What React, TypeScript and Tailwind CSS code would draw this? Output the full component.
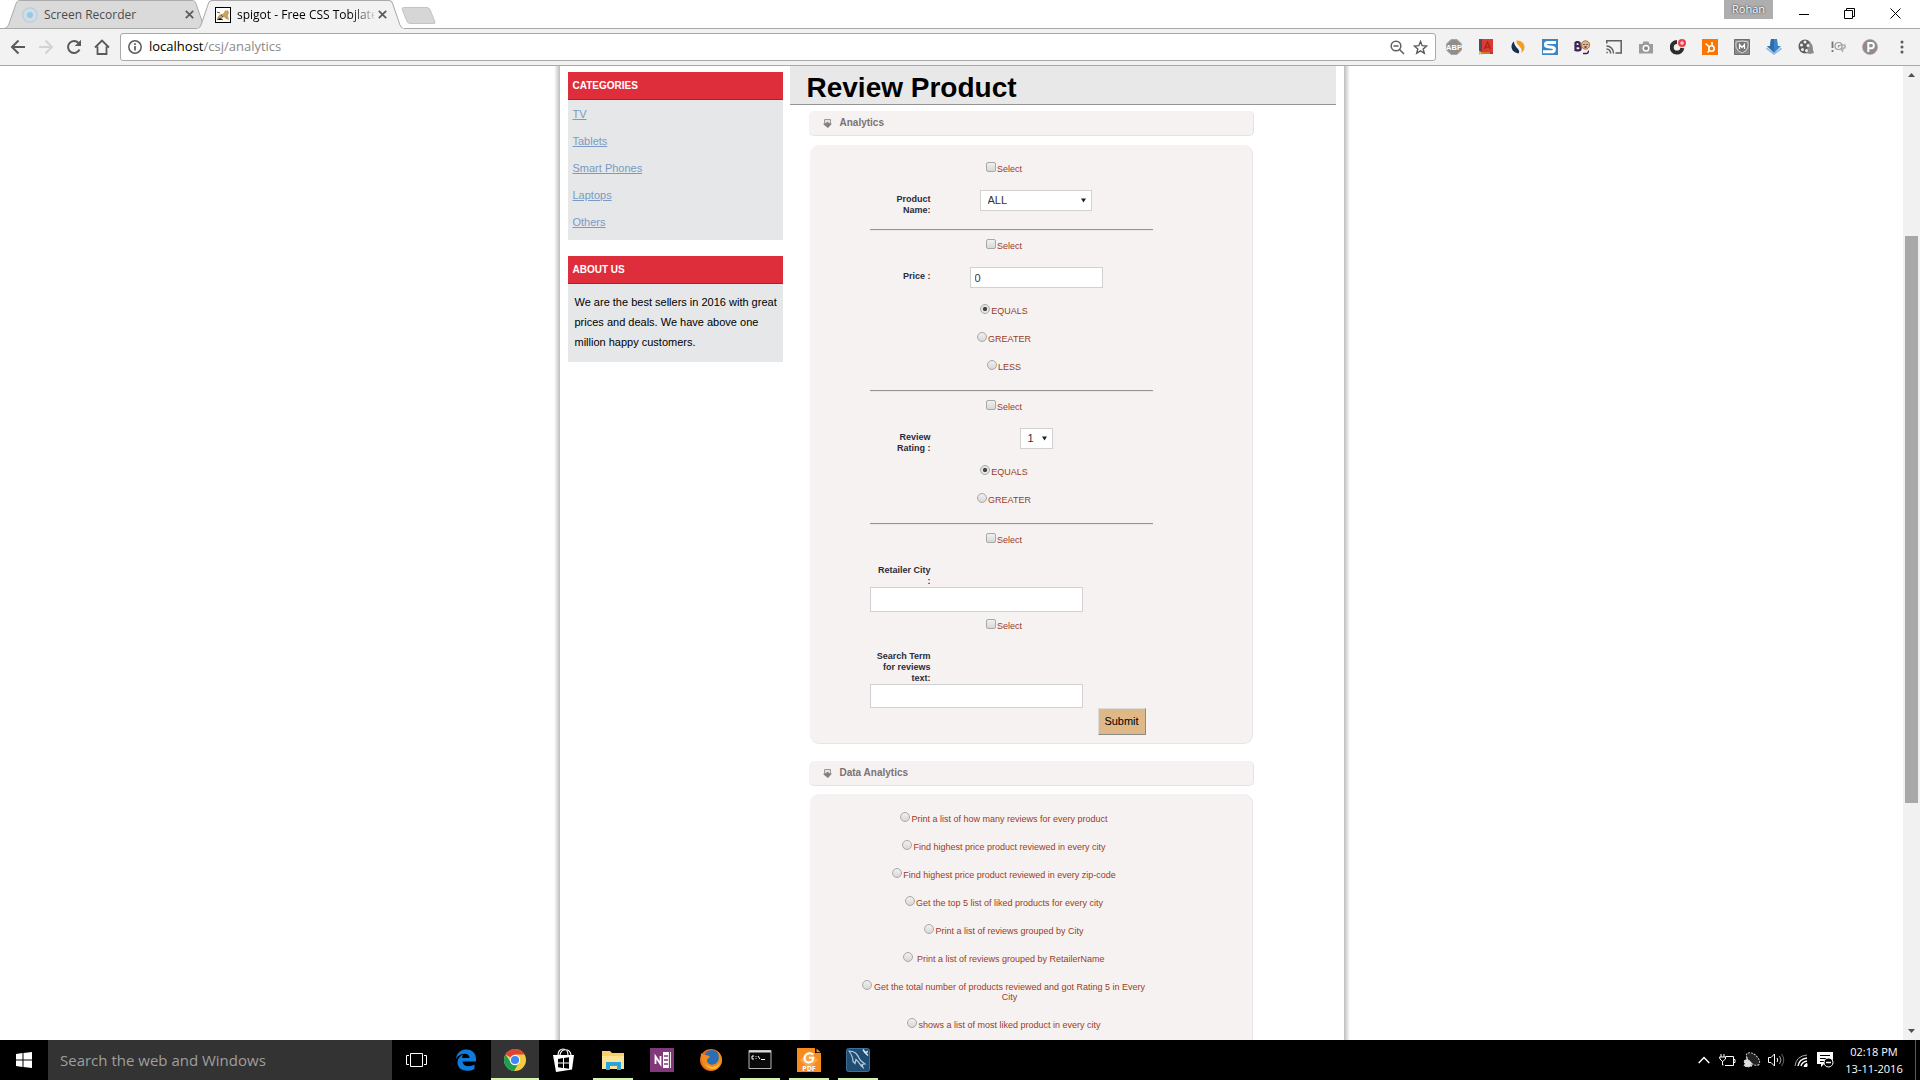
import type { ReactNode } from "react";

const ARIAL = "font-['Liberation_Sans',Arial,sans-serif]";

function TabShape({ active }: { active: boolean }) {
  return (
    <svg
      className="absolute inset-0 h-full w-full"
      viewBox="0 0 206 28"
      preserveAspectRatio="none"
      aria-hidden="true"
    >
      <path
        d="M0 28.5 C3 28 4 26 5 24 L12 4 C13 1 14 .5 16 .5 H190 C192 .5 193 1 194 4 L201 24 C202 26 203 28 206 28.5Z"
        fill={active ? "#f2f2f2" : "#dadada"}
        stroke="#a9a9a9"
      />
      {active && <path d="M1 28.5H205" stroke="#f2f2f2" strokeWidth="2" />}
    </svg>
  );
}

function CloseGlyph() {
  return (
    <svg width="9" height="9" viewBox="0 0 9 9" stroke="#5a5a5a" strokeWidth="1.7" aria-hidden="true">
      <path d="M.8 .8l7.4 7.4M8.2 .8L.8 8.2" />
    </svg>
  );
}

function TabStrip() {
  return (
    <div className="flex h-[29px] items-start justify-between border-b border-[#a9a9a9] bg-white">
      <div className="flex h-[29px] pl-1">
        <div className="relative flex h-7 w-[204px] items-center pl-[18px] pr-[14px]">
          <TabShape active={false} />
          <svg className="relative mt-px" width="16" height="16" viewBox="0 0 16 16" aria-hidden="true">
            <circle cx="8" cy="8" r="7.2" fill="none" stroke="#a5d4ee" strokeWidth="1.3" />
            <circle cx="8" cy="8" r="3" fill="#8fcaf0" />
          </svg>
          <span className="relative ml-1.5 flex-1 pt-0.5 text-[12px] text-[#4c4c4c]">Screen Recorder</span>
          <button type="button" aria-label="Close Screen Recorder" className="relative">
            <CloseGlyph />
          </button>
        </div>
        <div className="relative -ml-3 flex h-[29px] w-[209px] items-center pl-[19px] pr-[18px]">
          <TabShape active />
          <svg className="relative" width="16" height="16" viewBox="0 0 16 16" aria-hidden="true">
            <rect x=".5" y=".5" width="15" height="15" fill="#fff" stroke="#000" />
            <path d="M2 12c1-3 2-5 5-5l2-1 1-3 1 1 2-1 1 3-1 2c0 3 1 3 1 5l-3-1-2-2-3 2z" fill="#c9a35c" />
            <path d="M2 5l3 1M2 13l3-2 3 2M6 8l2 2" stroke="#555" />
          </svg>
          <span className="relative ml-1.5 flex-1 overflow-hidden whitespace-nowrap bg-gradient-to-r from-black from-80% to-[#d0d0d0] bg-clip-text pt-px text-[12px] text-transparent">
            spigot - Free CSS Tobjlate
          </span>
          <button type="button" aria-label="Close spigot" className="relative ml-1">
            <CloseGlyph />
          </button>
        </div>
        <button type="button" aria-label="New tab" className="-ml-1 mt-[7px] h-[18px]">
          <svg width="36" height="18" viewBox="0 0 36 18" aria-hidden="true">
            <path d="M1 2Q1 .5 3 .5H26q2 0 3 2L34 15q.5 1.500-1 1.500H9q-2 0-3-2z" fill="#d6d6d6" stroke="#c4c4c4" />
          </svg>
        </button>
      </div>
      <div className="flex items-start">
        <span className="mr-[7px] h-[19px] w-[49px] bg-[#aeaeae] text-center text-[11px] leading-[18px] text-white [text-shadow:0_0_2px_#000]">
          Rohan
        </span>
        <button type="button" aria-label="Minimize" className="flex h-[27px] w-12 items-center justify-center">
          <svg width="10" height="10" aria-hidden="true"><path d="M0 5.500H10" stroke="#000" /></svg>
        </button>
        <button type="button" aria-label="Restore" className="flex h-[27px] w-[42px] items-center justify-center">
          <svg width="11" height="11" fill="none" stroke="#000" aria-hidden="true">
            <path d="M.5 2.500h8v8h-8zM2.500 2V.5h8v8H9" />
          </svg>
        </button>
        <button type="button" aria-label="Close window" className="flex h-[27px] w-[50px] items-center justify-center">
          <svg width="11" height="11" stroke="#000" aria-hidden="true"><path d="M.5 .5l10 10M10.500 .5l-10 10" /></svg>
        </button>
      </div>
    </div>
  );
}

function Svg16({ children }: { children: ReactNode }) {
  return (
    <svg width="16" height="16" viewBox="0 0 16 16" aria-hidden="true">
      {children}
    </svg>
  );
}

const extensions: { name: string; art: ReactNode }[] = [
  {
    name: "Adblock Plus",
    art: (
      <>
        <path d="M5 .5h6l4.500 4.500v6L11 15.500H5L.5 11V5z" fill="#8e8e8e" stroke="#a5a5a5" />
        <text x="8" y="10.700" textAnchor="middle" fontSize="7.500" fontWeight="700" fill="#fff" fontFamily="Liberation Sans">ABP</text>
      </>
    ),
  },
  {
    name: "Dictionary",
    art: (
      <>
        <path d="M1 0h3v13H1z" fill="#4d4d55" />
        <path d="M4 0h11v13H4z" fill="#da3a30" />
        <path d="M2 13h13v2H3z" fill="#b8382c" />
        <path d="M1 11.500l3 2V16l-1.500-1L1 16zM4 13.500h8v1H4z" fill="#e8b33c" />
        <path d="M6.500 10l3-7 3 7M7.500 8h4" stroke="#a31f1c" fill="none" strokeWidth="1.200" />
      </>
    ),
  },
  {
    name: "SimilarWeb",
    art: (
      <>
        <path d="M4 2.500C-.5 6 1 13.500 8.500 14.500 11.500 10 4 9 4 2.500z" fill="#15304f" />
        <path d="M6.500 1.500C14.500 1 17.500 10 11 14 14 8 6 7 6.500 1.500z" fill="#f79c1c" />
      </>
    ),
  },
  {
    name: "Stylish",
    art: (
      <>
        <path d="M0 0h16v16H0z" fill="#3b86c2" />
        <path d="M14 3.500H6C2.500 3.500 2.500 7.500 6 7.700l4 .6c3.500 .5 3 4.500-.5 4.500H1" stroke="#fff" strokeWidth="3" fill="none" />
      </>
    ),
  },
  {
    name: "BuiltWith",
    art: (
      <>
        <path d="M1.500 3v9M1.500 3.200h2.300a1.800 1.800 0 0 1 0 3.900H2h2.500a2 2 0 0 1 0 4.200H1.500" fill="none" stroke="#3b2450" strokeWidth="2.200" />
        <circle cx="11.500" cy="6" r="4.200" fill="#e6b57c" stroke="#8a5a3c" strokeWidth=".8" />
        <path d="M9 14.500h3.500q2 0 2-3M10 5v1M13 5v1M10.500 8h2" stroke="#3b2450" strokeWidth="1.300" fill="none" />
      </>
    ),
  },
  {
    name: "Cast",
    art: (
      <g fill="none" stroke="#5f5f5f" strokeWidth="1.500">
        <path d="M0.800 4.500V1.800h14.400v12.200H9.500" />
        <path d="M.5 7a7 7 0 0 1 7 7.500M.5 10a4 4 0 0 1 4 4.500M.3 13.500h1.500" />
      </g>
    ),
  },
  {
    name: "Screenshot",
    art: (
      <>
        <path d="M1 5h3.500l1-2.500h5l1 2.500H15v9.500H1z" fill="#9b9b9b" />
        <circle cx="8" cy="9.300" r="3.500" fill="#fff" />
        <circle cx="8" cy="9.300" r="2" fill="#8b8b8b" />
      </>
    ),
  },
  {
    name: "Site checker",
    art: (
      <>
        <path d="M12.300 9a5.300 5.300 0 1 1-5.300-6" fill="none" stroke="#2d2d2d" strokeWidth="4" />
        <circle cx="12" cy="4" r="4" fill="#ee3f46" />
        <path d="M10 4h4M12 2v4" stroke="#fff" />
      </>
    ),
  },
  {
    name: "HubSpot",
    art: (
      <>
        <path d="M0 0h16v16H0z" fill="#fb7500" />
        <g stroke="#fff" fill="none" strokeWidth="1.600">
          <circle cx="9.500" cy="9.500" r="2.700" />
          <path d="M10 7V3M7.500 8L3.500 4.500M7.500 11.500l-2 2" />
        </g>
      </>
    ),
  },
  {
    name: "Shield",
    art: (
      <>
        <path d="M.5 .5h15v15H.5z" fill="#8b8b8b" stroke="#6d6d6d" />
        <path d="M2 3q6-2 12 0v5q-1 4-6 6-5-2-6-6z" fill="#777" stroke="#ddd" />
        <path d="M5.500 10V5.500L8 8.500l2.500-3V10" fill="none" stroke="#fff" strokeWidth="1.200" />
      </>
    ),
  },
  {
    name: "Download",
    art: (
      <>
        <path d="M1 8.500l7 5.500 7-5.500 1 1.500-8 6-8-6z" fill="#8fbce6" />
        <path d="M5 0h6l1 7h3l-7 7-7-7h3z" fill="#3d83c8" />
        <path d="M5 0h3v13L1 7h3z" fill="#2f6cab" />
      </>
    ),
  },
  {
    name: "Film reel",
    art: (
      <>
        <ellipse cx="7" cy="7.500" rx="6.500" ry="7" fill="#5f5f5f" />
        <path d="M11 3q4 1 4 8l1 3-4 1-4-1z" fill="#8b8b8b" />
        <g fill="#eee">
          <circle cx="7" cy="3" r="1.500" />
          <circle cx="3.500" cy="6" r="1.500" />
          <circle cx="4.500" cy="10.500" r="1.500" />
          <circle cx="8.500" cy="11.500" r="1.500" />
          <circle cx="10" cy="6.500" r="1.500" />
        </g>
      </>
    ),
  },
  {
    name: "Inspector",
    art: (
      <g fill="none" stroke="#9a9a9a" strokeWidth="1.200">
        <path d="M2.500 2.500v6.500M2.500 11v2" strokeWidth="1.800" stroke="#777" />
        <circle cx="8.500" cy="7" r="3.500" />
        <path d="M8.500 8.500V6.500h2M11 10l2 3M10.500 6h4.500v3h-2v2" />
      </g>
    ),
  },
  {
    name: "Pinterest",
    art: (
      <>
        <circle cx="8" cy="8" r="7.500" fill="#8d8d8d" stroke="#c08a9a" strokeWidth=".6" />
        <path d="M6.300 13V4h3a2.300 2.300 0 0 1 0 5.200H6.500" fill="none" stroke="#fff" strokeWidth="2" />
      </>
    ),
  },
];

function Toolbar() {
  return (
    <div className="flex h-[37px] items-center border-b border-[#a9a9a9] bg-[#f2f2f2] pl-2.5 pr-4">
      <div className="flex w-[110px] shrink-0 items-center gap-3">
        <button type="button" aria-label="Back">
          <svg width="16" height="16" fill="none" stroke="#5a5a5a" strokeWidth="2" aria-hidden="true">
            <path d="M15 8H2.500M8.500 1.500L2 8l6.500 6.500" />
          </svg>
        </button>
        <button type="button" aria-label="Forward">
          <svg width="16" height="16" fill="none" stroke="#d3d3d3" strokeWidth="2" aria-hidden="true">
            <path d="M1 8h12.500M7.500 1.500L14 8l-6.500 6.500" />
          </svg>
        </button>
        <button type="button" aria-label="Reload">
          <svg width="16" height="16" aria-hidden="true">
            <path d="M13.500 10.500A6 6 0 1 1 12.500 4" fill="none" stroke="#5a5a5a" strokeWidth="2" />
            <path d="M15 .8V7H8.800z" fill="#5a5a5a" />
          </svg>
        </button>
        <button type="button" aria-label="Home">
          <svg width="16" height="16" fill="none" stroke="#5a5a5a" strokeWidth="1.800" aria-hidden="true">
            <path d="M1 8.500L8 1.500l7 7M3.500 7.500V15h9V7.500" />
          </svg>
        </button>
      </div>
      <div className="flex h-7 flex-1 items-center rounded-[3px] border border-[#a9a9a9] bg-white px-[7px]">
        <svg width="14" height="14" aria-hidden="true">
          <circle cx="7" cy="7" r="6.200" fill="none" stroke="#5a5a5a" strokeWidth="1.500" />
          <path d="M7 6v4.500M7 3.200V5" stroke="#5a5a5a" strokeWidth="1.700" />
        </svg>
        <span className="ml-[7px] flex-1 text-[13px] text-[#8a8a8a]">
          <span className="text-black">localhost</span>/csj/analytics
        </span>
        <div className="flex items-center gap-2">
          <svg width="15" height="15" fill="none" stroke="#5f5f5f" strokeWidth="1.500" aria-hidden="true">
            <circle cx="6" cy="6" r="4.800" />
            <path d="M9.500 9.500l4.500 4.500M3.500 6h5" />
          </svg>
          <svg width="15" height="15" viewBox="0 0 15 15" fill="none" stroke="#5a5a5a" strokeWidth="1.400" aria-hidden="true">
            <path d="M7.500 1.500l1.700 4.200 4.500.3-3.500 2.900 1.100 4.400-3.800-2.400-3.800 2.400 1.100-4.400L1.300 6l4.500-.3z" />
          </svg>
        </div>
      </div>
      <div className="ml-[10px] flex items-center gap-4">
        {extensions.map((e) => (
          <button key={e.name} type="button" aria-label={e.name}>
            <Svg16>{e.art}</Svg16>
          </button>
        ))}
      </div>
      <button type="button" aria-label="Menu" className="ml-[22px]">
        <svg width="4" height="14" fill="#5a5a5a" aria-hidden="true">
          <circle cx="2" cy="2" r="1.500" /><circle cx="2" cy="7" r="1.500" /><circle cx="2" cy="12" r="1.500" />
        </svg>
      </button>
    </div>
  );
}

function Sidebar() {
  return (
    <aside className="ml-2 mt-1.5 w-[215px] shrink-0">
      <section className="bg-[#e5e7e9]">
        <h2 className="h-7 border-b border-[#a8202c] bg-[#df2e3b] pl-[5px] text-[10px] font-bold leading-[27px] text-white">
          CATEGORIES
        </h2>
        <ul className="pb-1 pl-[5px] pt-px text-[11px] leading-[27px]">
          {["TV", "Tablets", "Smart Phones", "Laptops", "Others"].map((c) => (
            <li key={c}>
              <a href="#" className="text-[#7a9ac4] underline">{c}</a>
            </li>
          ))}
        </ul>
      </section>
      <section className="mt-4 bg-[#e5e7e9]">
        <h2 className="h-7 border-b border-[#a8202c] bg-[#df2e3b] pl-[5px] text-[10px] font-bold leading-[27px] text-white">
          ABOUT US
        </h2>
        <p className="pb-[10px] pl-[7px] pr-0.5 pt-2 text-[11px] leading-5 text-black">
          We are the best sellers in 2016 with great prices and deals. We have above one million happy customers.
        </p>
      </section>
    </aside>
  );
}

const controlShade = "bg-gradient-to-b from-[#f0f0f0] to-[#d8d8d8] border border-[#a8a8a8]";

function Tick({ label }: { label: string }) {
  return (
    <label className="flex w-[269px] items-start justify-center gap-px text-[9px] leading-[10px] text-[#993c1d]">
      <input type="checkbox" aria-label={label} className={`size-[10px] appearance-none rounded-[2px] ${controlShade}`} />
      <span className="mt-0.5">Select</span>
    </label>
  );
}

function Radio({ name, label, checked = false }: { name: string; label: string; checked?: boolean }) {
  return (
    <label className="flex w-full items-start justify-center gap-px text-center text-[9px] leading-[10px] text-[#993c1d]">
      <input
        type="radio"
        name={name}
        defaultChecked={checked}
        className={`size-[10px] shrink-0 appearance-none rounded-full checked:bg-[radial-gradient(circle,#444_30%,#e4e4e4_45%)] ${controlShade}`}
      />
      <span className="mt-0.5">{label}</span>
    </label>
  );
}

function SectionBar({ title }: { title: string }) {
  return (
    <h2 className="flex h-[25px] w-[445px] items-center rounded-[5px] border-b border-r border-[#e6e2e2] bg-[#f6f2f2] pb-px pl-3.5 text-[10px] font-bold text-[#7b7272]">
      <svg width="9" height="9" viewBox="0 0 9 9" className="mr-2 mt-px" aria-hidden="true">
        <path d="M1.500 .5h6v4h-6z" fill="#e2e2e2" stroke="#9a9a9a" />
        <path d="M3.500 3h2v1.500H9L5 9 .5 5.500V4.500h3z" fill="#808080" />
      </svg>
      {title}
    </h2>
  );
}

const fieldLabel = "w-[61px] text-right text-[9px] font-bold leading-[11px] text-[#2c2c38]";
const fieldBox = "border border-[#d2d0d0] bg-white text-[11px] text-[#333]";

function DropDown({ id, value, className }: { id: string; value: string; className: string }) {
  return (
    <div className={`relative h-[21px] ${className}`}>
      <select id={id} defaultValue={value} className={`block h-full w-full appearance-none pl-[7px] ${fieldBox}`}>
        <option>{value}</option>
      </select>
      <svg className="pointer-events-none absolute right-1.5 top-2" width="5" height="5" aria-hidden="true">
        <path d="M0 .5h5L2.500 4.500z" fill="#222" />
      </svg>
    </div>
  );
}

function Rule() {
  return <hr className="mb-2 mt-[18px] h-0.5 w-[283px] border-0 border-t border-[#949494] bg-[#ebe8e8]" />;
}

function AnalyticsForm() {
  return (
    <form className="ml-px mt-[9px] w-[443px] rounded-[9px] border-b border-r border-[#e9e5e5] bg-[#f6f2f2] pb-2 pl-[60px] pt-[17px]">
      <Tick label="Filter by product name" />
      <div className="mt-4 flex h-[21px] items-start">
        <label htmlFor="product" className={`${fieldLabel} mt-1 pl-5`}>Product Name:</label>
        <DropDown id="product" value="ALL" className="ml-[49px] w-28" />
      </div>
      <Rule />
      <Tick label="Filter by price" />
      <div className="mt-4 flex h-[22px] items-start">
        <label htmlFor="price" className={`${fieldLabel} mt-1`}>Price :</label>
        <input id="price" type="text" defaultValue="0" className={`ml-[39px] h-[21px] w-[133px] pl-1 ${fieldBox}`} />
      </div>
      <div className="mt-[15px] flex w-[269px] flex-col gap-4">
        <Radio name="price-op" label="EQUALS" checked />
        <Radio name="price-op" label="GREATER" />
        <Radio name="price-op" label="LESS" />
      </div>
      <Rule />
      <Tick label="Filter by review rating" />
      <div className="mt-4 flex h-[22px] items-start">
        <label htmlFor="rating" className={`${fieldLabel} mt-1 pl-5`}>Review Rating :</label>
        <DropDown id="rating" value="1" className="ml-[89px] w-[33px]" />
      </div>
      <div className="mt-[15px] flex w-[269px] flex-col gap-4">
        <Radio name="rating-op" label="EQUALS" checked />
        <Radio name="rating-op" label="GREATER" />
      </div>
      <Rule />
      <Tick label="Filter by retailer city" />
      <label htmlFor="city" className={`${fieldLabel} mt-5 block pl-[5px]`}>Retailer City :</label>
      <input id="city" type="text" className={`block h-[25px] w-[213px] px-1 ${fieldBox}`} />
      <div className="mt-[7px]"><Tick label="Filter by search term" /></div>
      <label htmlFor="term" className={`${fieldLabel} mt-5 block pl-[5px]`}>Search Term for reviews text:</label>
      <input id="term" type="text" className={`block h-6 w-[213px] px-1 ${fieldBox}`} />
      <button
        type="button"
        className="ml-[228px] block h-[27px] w-12 border border-b-[#8a8a8a] border-l-[#dcdcdc] border-r-[#8a8a8a] border-t-[#dcdcdc] bg-[#deb887] text-[11px] text-black"
      >
        Submit
      </button>
    </form>
  );
}

const queries = [
  "Print a list of how many reviews for every product",
  "Find highest price product reviewed in every city",
  "Find highest price product reviewed in every zip-code",
  "Get the top 5 list of liked products for every city",
  "Print a list of reviews grouped by City",
  "\u00a0Print a list of reviews grouped by RetailerName",
  "Get the total number of products reviewed and got Rating 5 in Every City",
  "shows a list of most liked product in every city",
];

function DataForm() {
  return (
    <form className="ml-px mt-2 w-[443px] rounded-t-[9px] border-r border-[#e9e5e5] bg-[#f6f2f2] pb-10 pl-[52px] pt-[18px]">
      <div className="flex w-[285px] flex-col gap-4">
        {queries.map((q) => (
          <Radio key={q} name="query" label={q} />
        ))}
      </div>
    </form>
  );
}

function Page() {
  return (
    <div className={`flex min-h-0 flex-1 bg-white ${ARIAL}`}>
      <div className="flex min-w-0 flex-1 justify-center overflow-hidden">
        <div className="h-[1100px] w-[6px] shrink-0 bg-gradient-to-r from-white to-[#bdbdbd]" />
        <div className="flex h-[1100px] w-[784px] shrink-0">
          <Sidebar />
          <main className="ml-[7px] w-[546px]">
            <h1 className="h-[39px] border-b border-[#949494] bg-[#e8e8e8] pl-[17px] text-[28px] font-bold leading-[43px] text-black">
              Review Product
            </h1>
            <div className="ml-[19px] mt-1.5">
              <SectionBar title="Analytics" />
              <AnalyticsForm />
              <div className="mt-[17px]"><SectionBar title="Data Analytics" /></div>
              <DataForm />
            </div>
          </main>
        </div>
        <div className="h-[1100px] w-[6px] shrink-0 bg-gradient-to-l from-white to-[#bdbdbd]" />
      </div>
      <div className="flex w-[17px] shrink-0 flex-col items-center justify-between bg-[#f1f1f1] py-[7px]">
        <svg width="7" height="4" aria-hidden="true"><path d="M0 4h7L3.500 0z" fill="#505050" /></svg>
        <div className="flex w-[13px] flex-1 flex-col py-0.5">
          <div className="flex-[157]" />
          <div className="flex-[567] bg-[#a8a8a8]" />
          <div className="flex-[224]" />
        </div>
        <svg width="7" height="4" aria-hidden="true"><path d="M0 0h7L3.500 4z" fill="#505050" /></svg>
      </div>
    </div>
  );
}

const apps: { name: string; open: boolean; active?: boolean; art: ReactNode }[] = [
  {
    name: "Edge",
    open: false,
    art: <path d="M2 11C3 4 7 1.500 12.500 1.500 19 1.500 22 6 22 11v2.500H8.500c.3 5 7 6 12 3V21C13 25 3 22.500 3.500 14 4 9.500 7 7.500 9.500 6.500 8.500 7.500 8 9 8 10h7.500C15.500 4.500 6 4 2 11z" fill="#0f7bdc" />,
  },
  {
    name: "Chrome",
    open: true,
    active: true,
    art: (
      <>
        <circle cx="12" cy="12" r="11" fill="#f7cb3f" />
        <path d="M12 12L2.500 6.500A11 11 0 0 1 21.500 6.500H12z" fill="#dc4437" />
        <path d="M2.500 6.500A11 11 0 0 0 11 23l5-8.500-8.500-.5z" fill="#1b9e57" />
        <circle cx="12" cy="12" r="5.200" fill="#fff" />
        <circle cx="12" cy="12" r="4.100" fill="#4385f5" />
      </>
    ),
  },
  {
    name: "Store",
    open: false,
    art: (
      <>
        <path d="M6 7c0-8 10-8 10 0M8 7c1-7 10-7 11 0" fill="none" stroke="#fff" strokeWidth="1.200" />
        <path d="M1 7h21l-2 14.500L4 24z" fill="#fff" />
        <path d="M6 11l5-1v4.500H6zM12 10l5-.8v5.300h-5zM6 15.500h5V20l-5-.8zM12 15.500h5v5.300l-5-.8z" fill="#000" />
      </>
    ),
  },
  {
    name: "File Explorer",
    open: true,
    art: (
      <>
        <path d="M1 3h8l2 2h12v16H1z" fill="#f5d06d" />
        <path d="M1 8h22v13H1z" fill="#fbe296" />
        <path d="M5 22v-8h15v8h-4v-4H9v4z" fill="#29a5de" />
      </>
    ),
  },
  {
    name: "OneNote",
    open: false,
    art: (
      <>
        <path d="M0 0h24v24H0z" fill="#80397b" />
        <path d="M12 4h9v16h-9z" fill="#fff" />
        <path d="M14 8h4M14 12h4M14 16h4M19.500 4v16" stroke="#80397b" strokeWidth="1.300" />
        <path d="M3 4l10-2v20L3 20z" fill="#80397b" />
        <path d="M5.500 16V8.500l5 7.500V8" fill="none" stroke="#fff" strokeWidth="1.800" />
      </>
    ),
  },
  {
    name: "Firefox",
    open: false,
    art: (
      <>
        <circle cx="12" cy="12" r="11" fill="#e8691b" />
        <circle cx="13" cy="9.500" r="7.500" fill="#2a6fb5" />
        <path d="M2 5C5 8 8 6 11 9c-3 2-4 3-2 6 3 3 8 2 10-2 2-4 0-8-1-10 6 4 7 12 1 17C11 26 1 20 2 5z" fill="#f08b1f" />
        <path d="M6 15c4 6 12 5 15-1-1 8-11 10-15 1z" fill="#f9c22e" />
      </>
    ),
  },
  {
    name: "Command Prompt",
    open: true,
    art: (
      <>
        <path d="M1 2.500h22v18H1z" fill="#0a0a0a" stroke="#b5b5b5" />
        <path d="M1 3.500h22" stroke="#dcdcdc" strokeWidth="2" />
        <path d="M6 8H4v3h2M8 8v.8M8 10.200V11M10 8l2 3M13 11.500h4" stroke="#fff" fill="none" />
      </>
    ),
  },
  {
    name: "PDF Reader",
    open: true,
    art: (
      <>
        <path d="M0 0h18v5h6v19H0z" fill="#f68b1f" />
        <path d="M19.500 .5l4 3.800h-4z" fill="#f68b1f" />
        <path d="M12 3l9 9-9 9-9-9z" fill="#fba54a" />
        <path d="M16.500 6.500c-5-3-9 0-9 4 0 4 5 5 8 2.500l.6-3.300H12" fill="none" stroke="#fff" strokeWidth="2" />
        <text x="12" y="22.500" textAnchor="middle" fontSize="7" fontWeight="700" fill="#fff">PDF</text>
      </>
    ),
  },
  {
    name: "MySQL Workbench",
    open: true,
    art: (
      <>
        <rect x=".5" y=".5" width="23" height="23" rx="2" fill="#1f4d74" stroke="#3f7099" />
        <path d="M3 3c6 0 8 3 10 7 1 3 3 4 6 6l-3 .5 1 3c-4-3-4-6-7-8l-1 4-2-2C7 9 6 7 3 3z" fill="none" stroke="#b5cbdc" strokeWidth="1.200" />
        <path d="M17 1.500l2 3 3-1M19 4.500l3 3" stroke="#d8e3ec" strokeWidth="1.600" fill="none" />
      </>
    ),
  },
];

function Taskbar() {
  return (
    <footer className="flex h-10 shrink-0 items-stretch bg-black">
      <button type="button" aria-label="Start" className="flex w-12 items-center justify-center">
        <svg width="16" height="16" fill="#fff" aria-hidden="true">
          <path d="M0 2l6.500-1v6.500H0zM7.500 .9L16 0v7.500H7.500zM0 8.500h6.500V15L0 14zM7.500 8.500H16V16l-8.500-1z" />
        </svg>
      </button>
      <input
        type="text"
        aria-label="Search"
        placeholder="Search the web and Windows"
        className="w-[344px] bg-[#333] px-3 text-[15px] text-[#9f9f9f] outline-none placeholder:text-[#9f9f9f]"
      />
      <button type="button" aria-label="Task view" className="flex w-12 items-center justify-center">
        <svg width="21" height="14" fill="none" stroke="#fff" aria-hidden="true">
          <path d="M4.500 .5h12v13h-12zM3 2.500H.5v9H3M18 2.500h2.500v9H18" />
        </svg>
      </button>
      <nav className="ml-0.5 flex gap-px">
        {apps.map((a) => (
          <button
            key={a.name}
            type="button"
            aria-label={a.name}
            className={`flex w-12 flex-col items-center ${a.active ? "bg-[#333]" : ""}`}
          >
            <svg className="mt-2" width="24" height="24" viewBox="0 0 24 24" aria-hidden="true">{a.art}</svg>
            <span
              className={`mt-1.5 h-0.5 ${a.open ? "bg-[#d4f5a8]" : ""} ${a.active ? "w-12" : "w-10"}`}
            />
          </button>
        ))}
      </nav>
      <div className="ml-auto flex items-center text-white">
        <svg width="12" height="8" fill="none" stroke="#fff" strokeWidth="1.500" aria-hidden="true"><path d="M.7 7L6 1.500 11.300 7" /></svg>
        <svg className="ml-[9px]" width="17" height="14" fill="none" stroke="#fff" aria-hidden="true">
          <path d="M6.500 3.500h8v9H6M14.500 6.500h1.500v3h-1.500M2 1v3M5 1v3M.5 4h6v2L3.500 8.500 1 6zM3.500 8v4h1" />
        </svg>
        <svg className="ml-[7px]" width="18" height="16" aria-hidden="true">
          <ellipse cx="10" cy="7" rx="8" ry="4.500" transform="rotate(42 10 7)" fill="#222" stroke="#ccc" strokeDasharray="2 1" />
          <path d="M1 9l3-2 4 3 1 4-4 1-4-1 1-2zM3 6h3" fill="#ddd" stroke="#ddd" strokeDasharray="2 1" />
        </svg>
        <svg className="ml-[7px]" width="17" height="14" fill="none" stroke="#fff" aria-hidden="true">
          <path d="M.5 4.500h2.500l3.500-3.500v12L3 9.500H.5z" />
          <path d="M9 5q1.500 2 0 4" />
          <path d="M11.500 3q3 4 0 8" stroke="#aaa" />
          <path d="M13.500 1q4.500 6 0 12" stroke="#666" />
        </svg>
        <svg className="ml-[9px]" width="14" height="13" fill="none" stroke="#fff" aria-hidden="true">
          <path d="M1 12Q2 2 13 1" stroke="#aaa" />
          <path d="M4 12Q5 5 13 4M7 12q1-4 6-5" strokeWidth="1.400" />
          <path d="M10 12.500q.5-2.500 3-3v3z" fill="#fff" />
        </svg>
        <svg className="ml-[9px]" width="17" height="16" aria-hidden="true">
          <path d="M0 0h16v12H7l-3 3v-3H0z" fill="#fff" />
          <path d="M3 3.500h10M3 6.500h6M3 9.500h4" stroke="#000" />
          <circle cx="11.500" cy="10.500" r="4.500" fill="#000" stroke="#fff" />
          <path d="M9 10.500h5" stroke="#fff" strokeWidth="1.500" />
        </svg>
        <div className="ml-[9px] w-[62px] whitespace-nowrap text-center text-[11px] leading-[17px]">
          <div>02:18 PM</div>
          <div>13-11-2016</div>
        </div>
        <div className="ml-2.5 h-full w-[5px] border-l border-[#5a5a5a]" />
      </div>
    </footer>
  );
}

export default function App() {
  return (
    <div className="flex h-screen flex-col overflow-hidden font-['Open_Sans','Noto_Sans',sans-serif]">
      <header className="shrink-0">
        <TabStrip />
        <Toolbar />
      </header>
      <Page />
      <Taskbar />
    </div>
  );
}
